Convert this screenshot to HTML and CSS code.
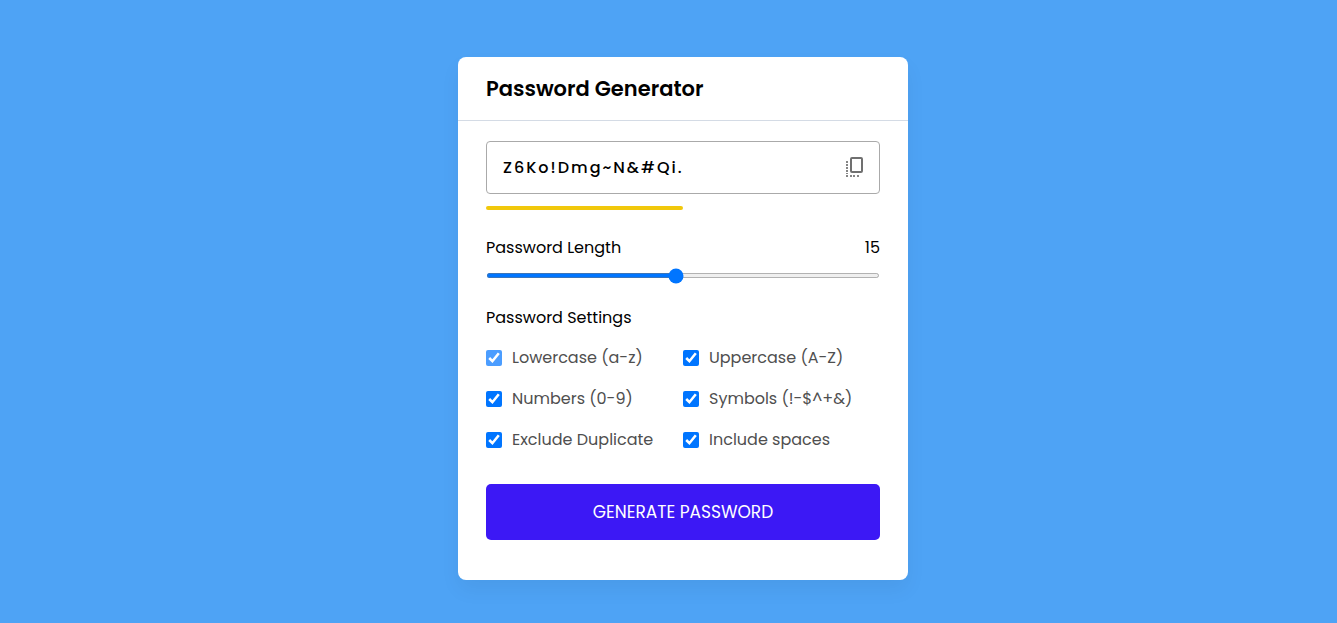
FILE: index.html
```html
<!DOCTYPE html>
<html lang="en">
<head>
<meta charset="utf-8">
<meta name="viewport" content="width=device-width, initial-scale=1">
<title>Password Generator</title>
<link rel="stylesheet" href="styles.css">
</head>
<body>
<main class="container">
  <h1 class="title">Password Generator</h1>
  <form class="wrapper">
    <div class="input-box">
      <input class="password" type="text" aria-label="Generated password" value="Z6Ko!Dmg~N&amp;#Qi." readonly>
      <button class="copy" type="button" aria-label="Copy password">
        <svg class="copy-icon" viewBox="0 0 18 21" aria-hidden="true">
          <rect x="5" y="1" width="11" height="14" rx="1" fill="none" stroke="currentColor" stroke-width="2"/>
          <path d="M0 4h2v2H0zM0 7h2v2H0zM0 10h2v2H0zM0 13h2v2H0zM0 16h2v1H0zM0 18h2v2H0zM4 18h2v2H4zM7 18h2v2H7zM11 18h2v2h-2z" fill="currentColor" opacity="0.85"/>
        </svg>
      </button>
    </div>
    <div class="strength"></div>
    <div class="length">
      <div class="details">
        <label for="length">Password Length</label>
        <output for="length">15</output>
      </div>
      <input class="slider" id="length" type="range" min="1" max="30" value="15">
    </div>
    <fieldset class="settings">
      <legend class="settings-title">Password Settings</legend>
      <div class="options">
        <label class="option"><input class="check check-locked" type="checkbox" checked>Lowercase (a-z)</label>
        <label class="option"><input class="check" type="checkbox" checked>Uppercase (A-Z)</label>
        <label class="option"><input class="check" type="checkbox" checked>Numbers (0-9)</label>
        <label class="option"><input class="check" type="checkbox" checked>Symbols (!-$^+&amp;)</label>
        <label class="option"><input class="check" type="checkbox" checked>Exclude Duplicate</label>
        <label class="option"><input class="check" type="checkbox" checked>Include spaces</label>
      </div>
    </fieldset>
    <button class="generate" type="button">GENERATE PASSWORD</button>
  </form>
</main>
</body>
</html>
```
FILE: styles.css
```css
* {
  box-sizing: border-box;
  margin: 0;
  padding: 0;
  font-family: Poppins, Inter, sans-serif;
}

body {
  display: flex;
  justify-content: center;
  align-items: flex-start;
  min-height: 100vh;
  padding: 57px 0 43px 29px;
  background: #4ea3f5;
  color: #000;
}

.container {
  width: 100%;
  max-width: 450px;
  background: #fff;
  border-radius: 8px;
  box-shadow: 0 10px 20px rgba(0, 0, 0, 0.05);
}

.title {
  padding: 16px 28px;
  border-bottom: 1px solid #d4dbe5;
  font-size: 21px;
  font-weight: 600;
  line-height: 31px;
}

.wrapper {
  padding: 20px 28px 40px;
}

.input-box {
  display: flex;
  align-items: center;
  height: 53px;
  padding: 0 15px 0 16px;
  border: 1px solid #aaa;
  border-radius: 4px;
}

.password {
  flex: 1;
  min-width: 0;
  border: 0;
  outline: 0;
  background: none;
  color: #000;
  font-size: 16px;
  font-weight: 500;
  letter-spacing: 2px;
}

.copy {
  display: flex;
  border: 0;
  background: none;
  color: #707070;
}

.copy-icon {
  width: 18px;
  height: 21px;
}

.strength {
  width: 50%;
  height: 4px;
  margin-top: 12px;
  border-radius: 4px;
  background: #f1c80b;
}

.length {
  margin-top: 25px;
}

.details {
  display: flex;
  justify-content: space-between;
  font-size: 16px;
  line-height: 25px;
}

.slider {
  display: block;
  width: 100%;
  height: 5px;
  margin-top: 13px;
}

.settings {
  margin-top: 27px;
  border: 0;
}

.settings-title {
  font-size: 16px;
  line-height: 25px;
}

.options {
  display: grid;
  grid-template-columns: 1fr 1fr;
  row-gap: 17px;
  margin-top: 16px;
}

.option {
  display: flex;
  align-items: center;
  gap: 10px;
  color: #4f4f4f;
  font-size: 16px;
  line-height: 24px;
  white-space: nowrap;
}

.check {
  width: 16px;
  height: 16px;
}

.check-locked {
  opacity: 0.7;
}

.generate {
  width: 100%;
  margin-top: 32px;
  padding: 16px;
  border: 0;
  border-radius: 5px;
  background: #3c18f5;
  color: #fff;
  font-size: 17px;
  font-weight: 400;
  line-height: 24px;
}
```
